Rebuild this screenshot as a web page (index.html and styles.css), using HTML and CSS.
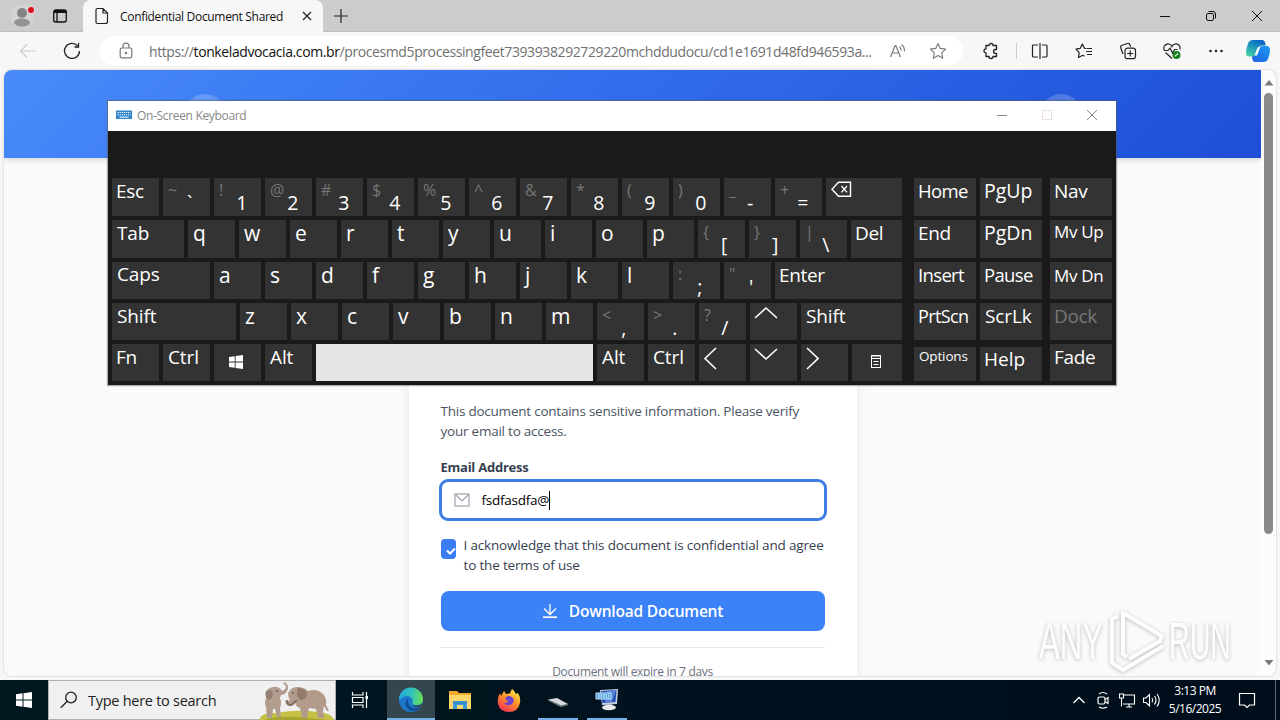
FILE: index.html
```html
<!DOCTYPE html>
<html lang="en">
<head>
    <meta charset="UTF-8">
    <title>Confidential Document Shared</title>
    <link rel="stylesheet" href="styles.css">
</head>
<body>
<div class="desktop">

    <!-- browser tabs -->
    <div class="tabstrip">
        <div class="tab-left">
            <svg width="28" height="28" viewBox="0 0 28 28"><circle cx="14" cy="14" r="11.5" fill="#d3d3d3"/><circle cx="14" cy="11" r="5" fill="#858585"/><ellipse cx="14" cy="20.500" rx="8" ry="4" fill="#929292"/><circle cx="23" cy="8" r="4" fill="#e4d8d8"/><circle cx="23" cy="8" r="3" fill="#d90d1e"/></svg>
            <svg width="16" height="16" viewBox="0 0 16 16" fill="none" stroke="#111" stroke-width="1.300"><rect x="1.700" y="2" width="12.600" height="12" rx="2"/><path d="M2 3.500h12" stroke-width="3"/><path d="M5 5v9"/></svg>
        </div>
        <div class="tab">
            <svg width="14" height="18" viewBox="0 0 14 18" fill="none" stroke="#222" stroke-width="1.200"><path d="M2.500 1.500h5.500l4.500 4.500v8.500a2 2 0 0 1-2 2h-8a1.500 1.500 0 0 1-1.500-1.500v-12a1.500 1.500 0 0 1 1.500-1.500zM8 1.500v4.500h4.500"/></svg>
            <span class="tab-title">Confidential Document Shared</span>
            <svg width="10" height="10" viewBox="0 0 10 10" stroke="#222" stroke-width="1.200"><path d="M1 1l8 8M9 1l-8 8"/></svg>
        </div>
        <svg class="plus" width="14" height="14" viewBox="0 0 14 14" stroke="#222" stroke-width="1.200"><path d="M7 0v14M0 7h14"/></svg>
        <div class="win-buttons">
            <svg width="12" height="12" viewBox="0 0 12 12" fill="none" stroke="#111"><path d="M1 6.500h10"/></svg>
            <svg width="12" height="12" viewBox="0 0 12 12" fill="none" stroke="#111"><rect x="1.500" y="3.500" width="7" height="7" rx="1.500"/><path d="M3.500 1.500h4.500a2.500 2.500 0 0 1 2.500 2.500v4.500"/></svg>
            <svg width="12" height="12" viewBox="0 0 12 12" stroke="#111"><path d="M1 1l10 10M11 1l-10 10"/></svg>
        </div>
    </div>

    <!-- address bar -->
    <div class="toolbar">
        <div class="tool nav"><svg width="18" height="18" viewBox="0 0 18 18" fill="none" stroke="#cbcbcb" stroke-width="1.100"><path d="M17 9h-15.500M8 2.500l-6.500 6.500 6.500 6.500"/></svg></div>
        <div class="tool nav"><svg width="18" height="18" viewBox="0 0 18 18" fill="none" stroke="#222" stroke-width="1.300"><path d="M16.500 9a7.500 7.500 0 1 1-2-5.200M15.500 1v4h-4"/></svg></div>
        <div class="address">
            <svg width="14" height="18" viewBox="0 0 14 18" fill="none" stroke="#777" stroke-width="1.200"><rect x="1.200" y="6" width="11.600" height="9.800" rx="1.800"/><path d="M4 6v-1.800a3 3 0 0 1 6 0v1.800"/><circle cx="7" cy="11" r=".7" fill="#777"/></svg>
            <div class="url">https://<b>tonkeladvocacia.com.br</b>/procesmd5processingfeet7393938292729220mchddudocu/cd1e1691d48fd946593a...</div>
            <svg width="18" height="16" viewBox="0 0 18 16" fill="none" stroke="#777" stroke-width="1.200"><path d="M1.500 14l4.700-11.500h.6l4.700 11.500M3.200 10h6.600M10.500 3.500q1.700 1.500 1.500 4M12.500 1.500q3.300 2.500 2.900 7"/></svg>
            <svg width="18" height="18" viewBox="0 0 18 18" fill="none" stroke="#777" stroke-width="1.100" stroke-linejoin="round"><path d="M9 1.500l2.300 4.900 5.300.7-3.900 3.700 1 5.400-4.700-2.600-4.700 2.600 1-5.400-3.900-3.700 5.300-.7z"/></svg>
        </div>
        <div class="tool"><svg width="18" height="18" viewBox="0 0 18 18" fill="none" stroke="#222" stroke-width="1.300"><path d="M4 3.500h3a2 2 0 0 1 4 0h3.500v4h-1a1.900 1.900 0 0 0 0 3.800h1v3.200h-3.500a2 2 0 0 1-4 0h-3v-3.600a2 2 0 0 1 0-4z" stroke-linejoin="round"/></svg></div>
        <i class="sep"></i>
        <div class="tool"><svg width="18" height="18" viewBox="0 0 18 18" fill="none" stroke="#222" stroke-width="1.200"><path d="M7 3h-4.500a1 1 0 0 0-1 1v10a1 1 0 0 0 1 1h4.500M11 3h4a1 1 0 0 1 1 1v10a1 1 0 0 1-1 1h-4M9 1v16"/></svg></div>
        <div class="tool"><svg width="18" height="18" viewBox="0 0 18 18" fill="none" stroke="#222" stroke-width="1.200" stroke-linejoin="round"><path d="M11.500 6.500l-2-.2-2.200-4.300-2.200 4.400-4.100.8 3.200 3.500-.7 4.800 4.300-2.200 1.700 1M12 6.500h5M11 9.500h6M12 12.500h5"/></svg></div>
        <div class="tool"><svg width="18" height="18" viewBox="0 0 18 18" fill="none" stroke="#222" stroke-width="1.200"><path d="M4 12l-2.200-6.200a2 2 0 0 1 1.200-2.500l5.500-1.800a2 2 0 0 1 2.400 1.200l.8 2"/><rect x="6" y="6.200" width="10.500" height="10.500" rx="2.500"/><path d="M11.200 8.500v6M8.200 11.500h6"/></svg></div>
        <div class="tool"><svg width="18" height="18" viewBox="0 0 18 18" fill="none" stroke="#222" stroke-width="1.200"><path d="M1.200 8a4 4 0 0 1 7.800-3.500 4 4 0 0 1 7.800 3M2.500 10.500l6.500 6M1 8.500h4l2-2.500 2.500 5 2-3.500h3"/><circle cx="13.500" cy="13" r="4" fill="#16811f" stroke="none"/><path d="M11.800 14.300l3.300-2.800" stroke="#d9f0d7"/></svg></div>
        <div class="tool"><svg width="18" height="18" viewBox="0 0 18 18" fill="#222"><circle cx="3.500" cy="9" r="1.300"/><circle cx="9" cy="9" r="1.300"/><circle cx="14.500" cy="9" r="1.300"/></svg></div>
        <svg class="copilot" width="24" height="24" viewBox="0 0 24 24">
            <defs>
                <linearGradient id="cp1" x1="0" y1="1" x2=".6" y2="0"><stop offset="0" stop-color="#4fd8a0"/><stop offset=".5" stop-color="#23a3b8"/><stop offset="1" stop-color="#0d66c5"/></linearGradient>
                <linearGradient id="cp2" x1="0" y1="1" x2="1" y2="0"><stop offset="0" stop-color="#1f5fe0"/><stop offset="1" stop-color="#1c9cf3"/></linearGradient>
            </defs>
            <path d="M7 1h9q2.500 0 3.200 3l.6 2.500h-4.300q-2.500 0-3.200 2.500l-1.500 5.500q-.8 3-3.500 3h-4q-3.300 0-3.300-3.500 0-4 2-9.500 1.200-3.500 5-3.500z" fill="url(#cp1)"/>
            <path d="M16.500 7h4q3.500 0 3.500 4 0 4-1.800 8.500-1.300 3.500-5 3.500h-8q-2 0-2.700-2.500l-.6-3q3.300 0 4.600-3l2-5.500q.8-2 4-2z" fill="url(#cp2)"/>
            <path d="M14.500 7.500l-3.500 9h-2.500l2.800-7.500q.8-1.500 3.200-1.500z" fill="#f5fbff"/>
        </svg>
    </div>

    <!-- web page -->
    <div class="viewport">
        <div class="page">
            <div class="page-header">
                <div class="header-inner">
                    <span class="bubble"></span>
                    <span class="bubble"></span>
                </div>
            </div>
            <div class="card">
                <p class="intro">This document contains sensitive information. Please verify<br>your email to access.</p>
                <label class="label">Email Address</label>
                <div class="input">
                    <svg width="16" height="14" viewBox="0 0 16 14" fill="none" stroke="#9ca3af" stroke-width="1.200"><rect x="1" y="1" width="14" height="12"/><path d="M1.500 1.500l6.500 6.500 6.500-6.500"/></svg>
                    <span class="typed">fsdfasdfa@</span><i class="caret"></i>
                </div>
                <div class="agree">
                    <span class="checkbox"><svg width="10" height="8" viewBox="0 0 10 8" fill="none" stroke="#fff" stroke-width="2"><path d="M1 3.500l3 3 5-5"/></svg></span>
                    <p class="terms">I acknowledge that this document is confidential and agree<br>to the terms of use</p>
                </div>
                <div class="button">
                    <svg width="16" height="16" viewBox="0 0 16 16" fill="none" stroke="#fff" stroke-width="1.300"><path d="M8 1v10.500M2 5.500l6 6 6-6"/><path d="M1 14.200h14" stroke-width="1.700"/></svg>
                    <span>Download Document</span>
                </div>
                <div class="expire">Document will expire in 7 days</div>
            </div>
        </div>
        <div class="scrollbar">
            <svg width="10" height="6" viewBox="0 0 10 6"><path d="M5 0l4.500 5.500h-9z" fill="#7b7b7b"/></svg>
            <div class="thumb"></div>
            <svg width="10" height="6" viewBox="0 0 10 6"><path d="M5 5.500l4.500-5.500h-9z" fill="#7b7b7b"/></svg>
        </div>
    </div>

    <!-- taskbar -->
    <div class="taskbar">
        <div class="start"><svg width="16" height="16" viewBox="0 0 16 16" fill="#fff"><path d="M0 2.200l6.500-.9v6.200h-6.500zM7.500 1.200l8.500-1.200v7.500h-8.500zM0 8.500h6.500v6.200l-6.500-.9zM7.500 8.500h8.500v7.500l-8.500-1.200z"/></svg></div>
        <div class="search">
            <svg width="18" height="18" viewBox="0 0 18 18" fill="none" stroke="#222" stroke-width="1.300"><circle cx="11" cy="6.500" r="5.300"/><path d="M7.200 10.300l-6.500 6.500"/></svg>
            <span>Type here to search</span>
            <svg class="elephants" width="76" height="39" viewBox="0 0 76 39">
                <path d="M0 39q2-8 17-7 22-4 42-1 14 1 16 8z" fill="#c5c144"/>
                <path d="M5 39q12-4 30-3t34 3z" fill="#a4a52f"/>
                <!-- calf -->
                <path d="M7 14q0-7 7-8 6-1 9 4 4-1 4-5l-3-3 2-1q5 4 2 9-2 4-6 4l-1 3q2 5 0 10l1 9h-4l-2-8h-2l-1 9h-5l-1-11q-2-3 0-9z" fill="#b29c8e"/>
                <path d="M7 10q5-3 7 2 0 5-4 7-5-3-3-9z" fill="#957e72"/>
                <!-- mother -->
                <path d="M29 12q3-6 9-6 7 0 11 4 9-3 15 3 4 4 3 11l3 6h-2l-3-5-1 5 1 7h-6l-2-9-7-1-2 10h-5l-2-10q-4-1-5-5-2 4-6 3-4-1-4-6 2 2 5 0-2-3-2-7z" fill="#b39b8b"/>
                <path d="M39 7q9 0 9 7-2 6-7 5-5-5-2-12z" fill="#937b6e"/>
                <path d="M28 19q0 5 4 5l6-5" fill="none" stroke="#79655b" stroke-width="1.500"/>
                <circle cx="18" cy="10" r=".8" fill="#333"/><circle cx="34" cy="12" r=".8" fill="#333"/>
            </svg>
        </div>
        <div class="app taskview"><svg width="18" height="18" viewBox="0 0 18 18" fill="none" stroke="#fff" stroke-width="1.200"><path d="M1.500 1v3h10.500v-3M1.500 17v-3h10.500v3M1.500 6.500h10.500v5h-10.500zM15.500 1v16"/><rect x="14.500" y="5" width="2.500" height="3" fill="#fff" stroke="none"/></svg></div>
        <div class="app active"><svg width="26" height="26" viewBox="0 0 26 26">
            <defs>
                <linearGradient id="eg1" x1="0" y1=".3" x2="1" y2=".4"><stop offset="0" stop-color="#25a9df"/><stop offset=".5" stop-color="#2fc3bf"/><stop offset="1" stop-color="#6bdc54"/></linearGradient>
            </defs>
            <circle cx="13" cy="13" r="12" fill="#1d78cb"/>
            <path d="M1 13a12 12 0 0 1 24-1q0 6-6.500 6-5 0-4-3 1-2-1-4-5-5-12.500 2z" fill="url(#eg1)"/>
            <path d="M9 12q-4 6 1.500 10.500 6 4 12-2.500-9 3-12-3-1-3 0-6z" fill="#124e98"/>
            <path d="M22.500 20q1.500-1.500 2-3.500-4 3-10 1.500 2 3 8 2z" fill="#34474e"/>
        </svg></div>
        <div class="app"><svg width="22" height="20" viewBox="0 0 22 20"><path d="M0 1h8l2 2h12v16h-22z" fill="#f2a928"/><path d="M0 5h22v14h-22z" fill="#fbd66a"/><path d="M4 19v-8h14v8h-4v-4h-6v4z" fill="#3c9ad8"/><path d="M4 13h14" stroke="#2a7db8"/></svg></div>
        <div class="app"><svg width="24" height="24" viewBox="0 0 24 24">
            <defs><linearGradient id="ff" x1=".8" y1="0" x2=".2" y2="1"><stop offset="0" stop-color="#fff04b"/><stop offset=".45" stop-color="#ff9427"/><stop offset="1" stop-color="#f12a59"/></linearGradient></defs>
            <path d="M3 5l1 3 3-5 2 3q3 0 4-1l2-4q2 1 4 5l2-1q3 5 2 10-2 9-11 9t-11-8q-1-6 2-11z" fill="url(#ff)"/>
            <path d="M8 10q4-4 8 0 2 3-1 6-5 3-8-1 3 0 5-2-3 0-4-3z" fill="#6b43ce"/>
        </svg></div>
        <div class="app running"><svg width="24" height="22" viewBox="0 0 24 22"><path d="M2 11.500l9-1.500 11 6-7 1.500z" fill="#d5d8dc"/><path d="M2 11.500l13 6 7-1.500v1l-7 2-13-6.500z" fill="#7e858b"/></svg></div>
        <div class="app running"><svg width="24" height="24" viewBox="0 0 24 24"><path d="M5 3l18-1-1 15-15 1z" fill="#c5d0de"/><path d="M6 4l15.500-1-1 12-13.500 1z" fill="#2452b7"/><path d="M12 4l9-1-4 12h-7z" fill="#5684d8"/><path d="M1 6h15v6h-15z" fill="#55a4e2" stroke="#c5e4fa"/><path d="M3 8h11M3 10h11" stroke="#fff" stroke-dasharray="1.500 1"/><path d="M11 17h6v3h-6z" fill="#acb5bf"/><ellipse cx="14" cy="20.500" rx="7" ry="2.800" fill="#e6e8ec"/></svg></div>
        <div class="tray">
            <svg width="24" height="18" viewBox="0 0 24 18" fill="none" stroke="#fff" stroke-width="1.300"><path d="M6.500 12l5.500-5.500 5.500 5.500"/></svg>
            <svg width="24" height="18" viewBox="0 0 24 18" fill="none" stroke="#fff" stroke-width="1.200"><rect x="7" y="6" width="7" height="7" rx="1.500"/><path d="M14 8.500l3-2v6l-3-2M8 3q4-3 8 0M8 16q4 2.500 8 0"/></svg>
            <svg width="24" height="18" viewBox="0 0 24 18" fill="none" stroke="#fff" stroke-width="1.100"><path d="M9 4h10.500v9h-11.500M4.500 3h4v4h-4zM6.500 7v8.500M11 16h6M14 13v3"/></svg>
            <svg width="24" height="18" viewBox="0 0 24 18" fill="none" stroke="#fff" stroke-width="1.100"><path d="M4.500 7h2.500l3.500-3.500v11.500l-3.500-3.500h-2.500zM13 7q1.500 2 0 4.500M15.500 5q3 4 0 8.500M18 3q4.500 6 0 12.500"/></svg>
            <div class="clock">3:13 PM<br>5/16/2025</div>
            <svg class="notify" width="18" height="18" viewBox="0 0 18 18" fill="none" stroke="#fff" stroke-width="1.200"><path d="M1.500 2.500h15v11.500h-5l-2.500 2.500-2.500-2.500h-5z"/></svg>
        </div>
    </div>

    <!-- on-screen keyboard window -->
    <div class="osk">
        <div class="osk-title">
            <svg width="16" height="10" viewBox="0 0 16 10"><rect y=".5" width="16" height="8.500" fill="#2f86cb"/><path d="M1.500 2.500h13M1.500 4.800h13" stroke="#fff" stroke-dasharray="1.200 .9"/><path d="M3.500 7.200h9" stroke="#fff"/></svg>
            <span>On-Screen Keyboard</span>
            <div class="osk-buttons">
                <svg width="12" height="12" viewBox="0 0 12 12" stroke="#888"><path d="M1 6.500h10"/></svg>
                <svg width="12" height="12" viewBox="0 0 12 12" fill="none" stroke="#ecdfe3"><rect x="1.500" y="1.500" width="9" height="9"/></svg>
                <svg width="12" height="12" viewBox="0 0 12 12" stroke="#888"><path d="M1 1l10 10M11 1l-10 10"/></svg>
            </div>
        </div>
        <div class="keyboard">
            <div class="main-keys">
                <div class="row r1">
                    <div class="key">Esc</div>
                    <div class="key dual punct"><sup>~</sup><sub>`</sub></div>
                    <div class="key dual"><sup>!</sup><sub>1</sub></div>
                    <div class="key dual"><sup>@</sup><sub>2</sub></div>
                    <div class="key dual"><sup>#</sup><sub>3</sub></div>
                    <div class="key dual"><sup>$</sup><sub>4</sub></div>
                    <div class="key dual"><sup>%</sup><sub>5</sub></div>
                    <div class="key dual"><sup>^</sup><sub>6</sub></div>
                    <div class="key dual"><sup>&amp;</sup><sub>7</sub></div>
                    <div class="key dual"><sup>*</sup><sub>8</sub></div>
                    <div class="key dual"><sup>(</sup><sub>9</sub></div>
                    <div class="key dual"><sup>)</sup><sub>0</sub></div>
                    <div class="key dual punct"><sup>_</sup><sub>-</sub></div>
                    <div class="key dual"><sup>+</sup><sub>=</sub></div>
                    <div class="key grow glyph"><svg width="22" height="18" viewBox="0 0 22 18" fill="none" stroke="#fff" stroke-width="1.400"><path d="M8.500 1.200h12v14h-12l-6.500-7zM11.500 5l5.500 6.400M17 5l-5.500 6.400"/></svg></div>
                </div>
                <div class="row r2">
                    <div class="key wide tab-key">Tab</div>
                    <div class="key letter">q</div>
                    <div class="key letter">w</div>
                    <div class="key letter">e</div>
                    <div class="key letter">r</div>
                    <div class="key letter">t</div>
                    <div class="key letter">y</div>
                    <div class="key letter">u</div>
                    <div class="key letter">i</div>
                    <div class="key letter">o</div>
                    <div class="key letter">p</div>
                    <div class="key dual punct"><sup>{</sup><sub>[</sub></div>
                    <div class="key dual punct"><sup>}</sup><sub>]</sub></div>
                    <div class="key dual punct"><sup>|</sup><sub>\</sub></div>
                    <div class="key grow">Del</div>
                </div>
                <div class="row r3">
                    <div class="key wide caps-key">Caps</div>
                    <div class="key letter">a</div>
                    <div class="key letter">s</div>
                    <div class="key letter">d</div>
                    <div class="key letter">f</div>
                    <div class="key letter">g</div>
                    <div class="key letter">h</div>
                    <div class="key letter">j</div>
                    <div class="key letter">k</div>
                    <div class="key letter">l</div>
                    <div class="key dual punct"><sup>:</sup><sub>;</sub></div>
                    <div class="key dual punct"><sup>"</sup><sub>'</sub></div>
                    <div class="key grow">Enter</div>
                </div>
                <div class="row r4">
                    <div class="key wide shift-key">Shift</div>
                    <div class="key letter">z</div>
                    <div class="key letter">x</div>
                    <div class="key letter">c</div>
                    <div class="key letter">v</div>
                    <div class="key letter">b</div>
                    <div class="key letter">n</div>
                    <div class="key letter">m</div>
                    <div class="key dual punct"><sup>&lt;</sup><sub>,</sub></div>
                    <div class="key dual punct"><sup>&gt;</sup><sub>.</sub></div>
                    <div class="key dual punct"><sup>?</sup><sub>/</sub></div>
                    <div class="key glyph"><svg width="24" height="14" viewBox="0 0 24 14" fill="none" stroke="#fff" stroke-width="1.600"><path d="M1 12l11-10 11 10"/></svg></div>
                    <div class="key wide grow">Shift</div>
                </div>
                <div class="row r5">
                    <div class="key">Fn</div>
                    <div class="key wide">Ctrl</div>
                    <div class="key center"><svg width="14" height="14" viewBox="0 0 16 16" fill="#fff"><path d="M0 2.200l6.500-.9v6.200h-6.500zM7.500 1.200l8.500-1.200v7.500h-8.500zM0 8.500h6.500v6.200l-6.500-.9zM7.500 8.500h8.500v7.500l-8.500-1.200z"/></svg></div>
                    <div class="key wide">Alt</div>
                    <div class="key space"></div>
                    <div class="key wide">Alt</div>
                    <div class="key wide">Ctrl</div>
                    <div class="key glyph"><svg width="14" height="24" viewBox="0 0 14 24" fill="none" stroke="#fff" stroke-width="1.600"><path d="M13 1l-11 10.500 11 10.500"/></svg></div>
                    <div class="key glyph"><svg width="24" height="14" viewBox="0 0 24 14" fill="none" stroke="#fff" stroke-width="1.600"><path d="M1 2l11 10 11-10"/></svg></div>
                    <div class="key glyph"><svg width="14" height="24" viewBox="0 0 14 24" fill="none" stroke="#fff" stroke-width="1.600"><path d="M2 1l11 10.500-11 10.500"/></svg></div>
                    <div class="key grow center"><svg width="10" height="13" viewBox="0 0 10 13" fill="none" stroke="#fff"><rect x=".5" y=".5" width="9" height="12"/><path d="M0 1h10M0 3.500h10M2.500 6.500h5M2.500 9.500h5" stroke-width="1.200"/></svg></div>
                </div>
            </div>
            <div class="nav-keys">
                <div class="row r1"><div class="key home">Home</div><div class="key pg">PgUp</div></div>
                <div class="row r2"><div class="key">End</div><div class="key pg">PgDn</div></div>
                <div class="row r3"><div class="key home">Insert</div><div class="key home">Pause</div></div>
                <div class="row r4"><div class="key prt">PrtScn</div><div class="key wide">ScrLk</div></div>
                <div class="row r5 low"><div class="key small">Options</div><div class="key help">Help</div></div>
            </div>
            <div class="side-keys">
                <div class="row r1"><div class="key">Nav</div></div>
                <div class="row r2"><div class="key mv">Mv Up</div></div>
                <div class="row r3"><div class="key mv mv-down">Mv Dn</div></div>
                <div class="row r4"><div class="key dim">Dock</div></div>
                <div class="row r5"><div class="key">Fade</div></div>
            </div>
        </div>
    </div>

    <!-- watermark -->
    <svg class="watermark" width="210" height="70" viewBox="0 0 210 70">
        <g class="wm-text">
            <text x="1" y="51" textLength="64" lengthAdjust="spacingAndGlyphs">ANY</text>
            <text x="131" y="51" textLength="62" lengthAdjust="spacingAndGlyphs">RUN</text>
        </g>
        <path d="M80 8l-6 3v44l11 7 40-24" fill="none" stroke="#fff" stroke-width="4"/>
        <path d="M89 49l-4-3v-41l39 23-2 5-31 18" fill="none" stroke="#fff" stroke-width="4"/>
    </svg>
</div>
</body>
</html>
```
FILE: styles.css
```css
* {
    box-sizing: border-box;
}
body {
    margin: 0;
    font-family: "Open Sans", "Noto Sans", sans-serif;
}
svg {
    display: block;
    flex-shrink: 0;
}
.desktop {
    position: relative;
    display: flex;
    flex-direction: column;
    width: 1280px;
    height: 720px;
    overflow: hidden;
    background: #f7f7f7;
}

/* tabs */
.tabstrip {
    display: flex;
    align-items: center;
    height: 32px;
    background: #ccc;
    border-bottom: 1px solid #bdbdbd;
}
.tab-left {
    display: flex;
    align-items: center;
    gap: 16px;
    width: 83px;
    padding-left: 8px;
}
.tab {
    display: flex;
    align-items: center;
    width: 240px;
    height: 32px;
    margin-bottom: -1px;
    padding: 0 11px 0 12px;
    background: #f7f7f7;
    border-radius: 8px 8px 0 0;
}
.tab-title {
    flex: 1;
    padding-left: 11px;
    font-size: 12px;
    letter-spacing: -0.32px;
    white-space: nowrap;
    color: #111;
}
.plus {
    margin-left: 11px;
}
.win-buttons {
    display: flex;
    gap: 34px;
    margin-left: auto;
    padding-right: 17px;
}

/* toolbar */
.toolbar {
    display: flex;
    align-items: center;
    height: 38px;
    padding-left: 6px;
}
.tool {
    display: flex;
    justify-content: center;
    width: 44px;
}
.sep {
    width: 1px;
    height: 16px;
    margin: 0 1px 0 3px;
    background: #ccc;
}
.address {
    display: flex;
    align-items: center;
    width: 863px;
    height: 30px;
    margin: 0 6px;
    padding: 0 16px 0 19px;
    background: #fff;
    border-radius: 15px;
    gap: 16px;
}
.address .url + svg {
    margin-right: 6px;
}
.url {
    flex: 1;
    min-width: 0;
    font-size: 14px;
    letter-spacing: -0.4px;
    white-space: nowrap;
    color: #707070;
}
.url b {
    font-weight: normal;
    color: #111;
}
.copilot {
    margin-left: 8px;
}

/* page */
.viewport {
    display: flex;
    height: 606px;
    margin: 0 4px 4px;
    border-radius: 8px;
    overflow: hidden;
    background: #fcfcfc;
    box-shadow: 0 0 2px #b5b5b5;
}
.page {
    width: 1257px;
    overflow: hidden;
    background: #f8fafc;
}
.page-header {
    height: 88px;
    padding: 24px 0;
    background: linear-gradient(135deg, #4a8bf9 0%, #3b7bf3 24%, #1d4ed8 100%);
    box-shadow: 0 2px 5px rgba(0, 0, 0, 0.14);
}
.header-inner {
    display: flex;
    justify-content: space-between;
    width: 896px;
    margin: 0 auto;
}
.bubble {
    width: 40px;
    height: 40px;
    border-radius: 50%;
    background: rgba(255, 255, 255, 0.2);
}
.card {
    width: 448px;
    height: 560px;
    margin: 48px auto 0;
    padding: 195px 32px 0;
    background: #fff;
    border-radius: 12px;
    box-shadow: 0 4px 12px rgba(0, 0, 0, 0.08);
}
.intro, .terms {
    margin: 0;
    font-size: 13.5px;
    line-height: 20px;
    white-space: nowrap;
    color: #4b5563;
}
.intro {
    letter-spacing: -0.23px;
}
.label {
    display: block;
    margin-top: 16px;
    font-size: 13px;
    line-height: 20px;
    font-weight: bold;
    letter-spacing: -0.25px;
    color: #374151;
}
.input {
    display: flex;
    align-items: center;
    height: 42px;
    margin: 2px -2px 0;
    padding-left: 12px;
    border: 3px solid #3f7de4;
    border-radius: 9px;
    font-size: 13.5px;
    letter-spacing: -0.24px;
    color: #000;
}
.typed {
    margin-left: 12px;
}
.caret {
    width: 1px;
    height: 19px;
    background: #000;
}
.agree {
    display: flex;
    gap: 8px;
    margin-top: 14px;
}
.checkbox {
    display: flex;
    flex-shrink: 0;
    align-items: center;
    justify-content: flex-end;
    width: 15px;
    height: 20px;
    margin-top: 4px;
    padding-top: 4px;
    border-radius: 4px;
    background: #3b7df3;
}
.terms {
    letter-spacing: -0.17px;
    color: #374151;
}
.button {
    display: flex;
    align-items: center;
    justify-content: center;
    gap: 11px;
    height: 40px;
    margin-top: 16px;
    border-radius: 8px;
    background: #3b82f6;
    color: #fff;
    font-size: 15.5px;
    font-weight: 600;
    letter-spacing: -0.2px;
}
.expire {
    margin-top: 16px;
    padding-top: 16px;
    border-top: 1px solid #e5e7eb;
    text-align: center;
    font-size: 12px;
    line-height: 16px;
    letter-spacing: -0.33px;
    color: #6b7280;
}
.scrollbar {
    display: flex;
    flex-direction: column;
    align-items: center;
    width: 15px;
    padding: 10px 0;
}
.thumb {
    width: 9px;
    height: 441px;
    margin: 7px 0 auto;
    border-radius: 5px;
    background: #8a8a8a;
}

/* taskbar */
.taskbar {
    display: flex;
    height: 40px;
    background: linear-gradient(90deg, #001820, #000d1b);
    color: #fff;
}
.start {
    display: flex;
    align-items: center;
    justify-content: center;
    width: 48px;
}
.search {
    display: flex;
    align-items: center;
    width: 288px;
    padding-left: 11px;
    background: #f0f0f0;
    border: 1px solid #b0b0b0;
    color: #222;
    font-size: 14.5px;
    letter-spacing: -0.27px;
}
.search span {
    flex: 1;
    margin-left: 10px;
    white-space: nowrap;
}
.app {
    display: flex;
    align-items: center;
    justify-content: center;
    width: 48px;
    margin-right: 1px;
}
.taskview {
    width: 50px;
    padding-right: 2px;
}
.active {
    background: #34474e;
    border-bottom: 2px solid #76b0e8;
}
.active svg {
    margin-top: 2px;
}
.running {
    width: 40px;
    margin: 0 5px 0 4px;
    border-bottom: 2px solid #76b0e8;
}
.tray {
    display: flex;
    align-items: center;
    margin-left: auto;
    padding-right: 19px;
    border-right: 1px solid #5e6973;
    margin-right: 4px;
}
.clock {
    width: 64px;
    text-align: center;
    font-size: 12px;
    line-height: 18px;
    letter-spacing: -0.5px;
}
.notify {
    margin-left: 11px;
}

/* on-screen keyboard */
.osk {
    position: absolute;
    left: 108px;
    top: 101px;
    width: 1008px;
    height: 284px;
    background: #1a1a1a;
    box-shadow: 0 0 1px 1px rgba(90, 90, 90, 0.5);
}
.osk-title {
    display: flex;
    align-items: center;
    height: 30px;
    padding: 0 18px 2px 8px;
    background: #fff;
    color: #888;
    font-size: 12px;
    letter-spacing: -0.33px;
}
.osk-title span {
    margin-left: 5px;
}
.osk-buttons {
    display: flex;
    gap: 33px;
    margin-left: auto;
}
.keyboard {
    display: flex;
    padding: 47px 4px 0;
    color: #fff;
}
.main-keys {
    width: 790px;
}
.nav-keys {
    width: 128px;
    margin: 0 8px 0 12px;
}
.side-keys {
    width: 62px;
}
.row {
    display: flex;
    gap: 4px;
    height: 37px;
    margin-bottom: 4px;
}
.r1, .r2 {
    height: 38px;
}
.key {
    width: 47px;
    padding-left: 4px;
    background: #333;
    font-size: 19px;
    line-height: 26px;
    letter-spacing: -0.35px;
    white-space: nowrap;
}
.wide {
    padding-left: 5px;
    letter-spacing: -0.1px;
}
.letter {
    padding-left: 5px;
    font-size: 21px;
    line-height: 27px;
}
.nav-keys .key, .side-keys .key {
    width: 62px;
}
.grow {
    flex: 1;
}
.tab-key {
    width: 72px;
}
.caps-key {
    width: 98px;
    line-height: 24px;
}
.shift-key {
    width: 124px;
}
.space {
    width: 277px;
    background: #e5e5e5;
}
.dual {
    display: flex;
    justify-content: space-between;
    padding: 0 14px 0 5px;
}
.dual sup {
    width: 0;
    font-size: 16px;
    line-height: 24px;
    color: #777;
}
.dual sub {
    padding-top: 12px;
    font-size: 19.5px;
}
.punct {
    padding-right: 18px;
}
.glyph {
    padding-top: 3px;
}
.center {
    display: flex;
    align-items: center;
    justify-content: center;
    padding: 0 3px 2px 0;
}
.low .key {
    height: 34px;
    margin-top: 3px;
}
.key.home {
    font-size: 18.5px;
    letter-spacing: -0.65px;
}
.key.pg {
    font-size: 19.5px;
    line-height: 25px;
    letter-spacing: 0;
}
.key.small {
    padding-left: 5px;
    font-size: 13.5px;
    line-height: 19px;
    letter-spacing: -0.15px;
}
.key.help {
    line-height: 25px;
    letter-spacing: 0;
}
.key.mv {
    font-size: 17px;
    line-height: 23px;
}
.key.mv-down {
    line-height: 28px;
}
.key.prt {
    font-size: 18px;
    letter-spacing: -0.6px;
}
.key.dim {
    color: #777;
}

.watermark {
    position: absolute;
    left: 1038px;
    top: 608px;
    opacity: 0.7;
    filter: drop-shadow(0 1px 2px rgba(0, 0, 0, 0.35));
}
.wm-text {
    fill: #fff;
    font-family: "Liberation Sans", sans-serif;
    font-size: 52px;
}
```
